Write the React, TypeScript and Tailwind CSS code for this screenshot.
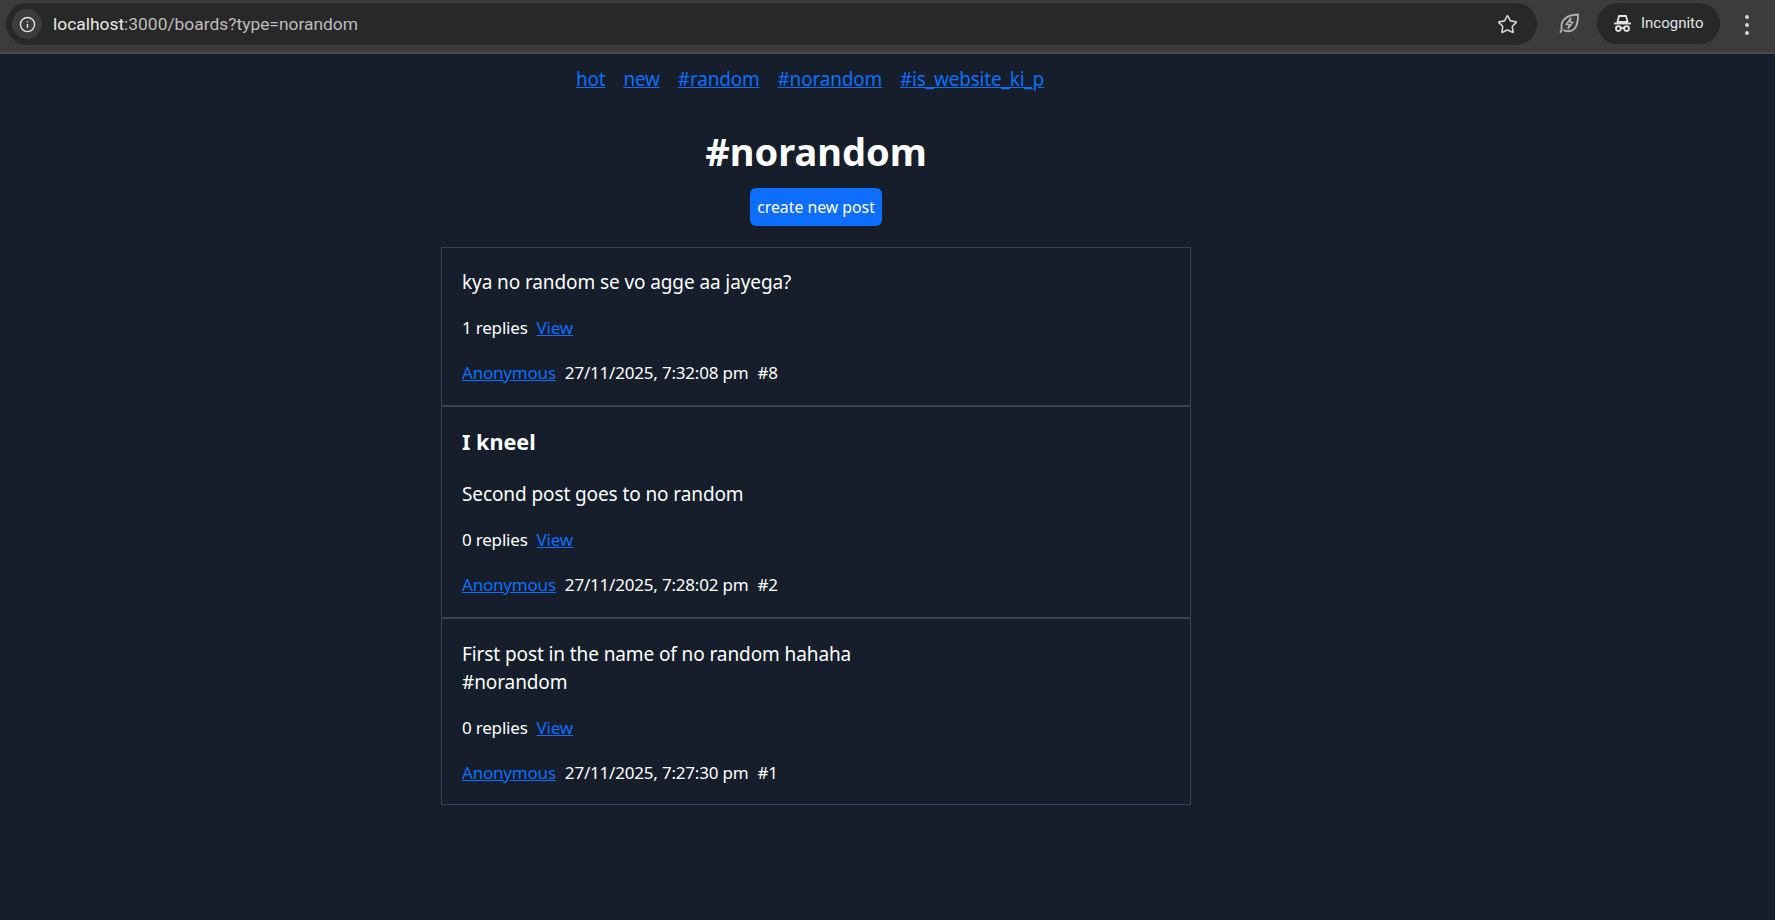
import { Info, Star } from "lucide-react";

const font = "font-['Noto_Sans','Open_Sans',sans-serif]";
const link = "text-[#0d6efd] underline";

function Meta({ replies, stamp, id }: { replies: number; stamp: string; id: number }) {
  return (
    <>
      <div className="mt-[18px] flex gap-[9px] text-[17px] leading-[27px] tracking-[-0.2px] text-white">
        <span>{replies} replies</span>
        <a className={link}>View</a>
      </div>
      <div className="mt-[18px] flex gap-[9px] text-[17px] leading-[27px] tracking-[-0.2px] text-white">
        <a className={link}>Anonymous</a>
        <span>{stamp}</span>
        <span>#{id}</span>
      </div>
    </>
  );
}

function Post({ title, lines, replies, stamp, id, last }: { title?: string; lines: string[]; replies: number; stamp: string; id: number; last?: boolean }) {
  return (
    <div className={"px-5 " + (title ? "pt-[19px] pb-[19px] " : last ? "pt-[21px] pb-[18px] " : "pt-5 pb-[19px] ") + (last ? "" : "border-b-2 border-[#36445a]")}>
      {title && <div className="mb-[22px] text-[21.6px] leading-[32px] font-bold text-white">{title}</div>}
      <div className="text-[19px] leading-[28px] tracking-[-0.1px] text-white">
        {lines.map((l) => (
          <div key={l}>{l}</div>
        ))}
      </div>
      <Meta replies={replies} stamp={stamp} id={id} />
    </div>
  );
}

export default function App() {
  return (
    <div className={"flex min-h-[920px] flex-col bg-[#151e2a] " + font}>
      <div className="flex h-[54px] items-start border-b-2 border-[#4a4a4a] bg-[#3c3c3c] pt-[3px] pl-[6px]">
        <div className="flex h-[42px] w-[1531px] items-center rounded-full bg-[#282828] pl-[6px] pr-[19px]">
          <div className="flex h-[30px] w-[30px] items-center justify-center rounded-full bg-[#3c3c3c]">
            <Info size={17} color="#e3e3e3" strokeWidth={2} />
          </div>
          <div className="ml-[11px] flex-1 font-['Roboto',sans-serif] text-[17.4px] text-[#bdbdbd]">
            <span className="text-[#e8e8e8]">localhost</span>:3000/boards?type=norandom
          </div>
          <Star size={21} color="#d6d6d6" strokeWidth={1.8} />
        </div>
        <svg className="mt-[9px] ml-[21px]" width="22" height="22" viewBox="0 0 22 22" fill="none" stroke="#b5b5b5" strokeWidth="1.8">
          <path d="M2.5 20c1.2-1 1.3-2.5 1-5C3 8.5 8 3 20 2.5c0 7.5-.8 12-3.8 14.6-2.8 2.4-6.5 2.7-10.2 1.2" strokeLinejoin="round" strokeLinecap="round" />
          <path d="M13 6 8 12.5h3.5l-1.5 4 5-6.3h-3.4z" strokeWidth="1.3" strokeLinejoin="round" />
        </svg>
        <div className="ml-[17px] flex h-[41px] w-[123px] items-center rounded-full bg-[#282828] pl-[16px] font-['Roboto',sans-serif] text-[15px] text-[#e3e3e3]">
          <svg width="19" height="19" viewBox="0 0 19 19" fill="none" stroke="#e3e3e3" strokeWidth="1.8">
            <path d="M6 2h7l1.6 6H4.4z" strokeLinejoin="round" />
            <path d="M1 9.5h17" />
            <circle cx="5.4" cy="14.6" r="2.4" />
            <circle cx="13.6" cy="14.6" r="2.4" />
            <path d="M7.8 14.2c1-.5 2.4-.5 3.4 0" />
          </svg>
          <span className="ml-[9px]">Incognito</span>
        </div>
        <div className="mt-[12px] ml-[25px] flex flex-col gap-[4px]">
          <span className="h-[4px] w-[4px] rounded-full bg-[#d6d6d6]" />
          <span className="h-[4px] w-[4px] rounded-full bg-[#d6d6d6]" />
          <span className="h-[4px] w-[4px] rounded-full bg-[#d6d6d6]" />
        </div>
      </div>

      <div className="flex w-[1632px] flex-col items-center">
        <nav className="mt-[10px] mr-[12px] flex gap-[18px] text-[19px] leading-[30px] tracking-[-0.2px]">
          <a className={link}>hot</a>
          <a className={link}>new</a>
          <a className={link}>#random</a>
          <a className={link}>#norandom</a>
          <a className={link}>#is_website_ki_p</a>
        </nav>
        <h1 className="mt-[33px] text-[38px] leading-[48px] font-bold text-white">#norandom</h1>
        <a className="mt-[13px] flex h-[38px] w-[132px] items-center justify-center rounded-[6px] bg-[#0d6efd] pt-px text-[15.8px] text-white">
          create new post
        </a>
        <div className="mt-[21px] w-[750px] border border-[#36445a]">
          <Post lines={["kya no random se vo agge aa jayega?"]} replies={1} stamp="27/11/2025, 7:32:08 pm" id={8} />
          <Post title="I kneel" lines={["Second post goes to no random"]} replies={0} stamp="27/11/2025, 7:28:02 pm" id={2} />
          <Post last lines={["First post in the name of no random hahaha", "#norandom"]} replies={0} stamp="27/11/2025, 7:27:30 pm" id={1} />
        </div>
      </div>
    </div>
  );
}
